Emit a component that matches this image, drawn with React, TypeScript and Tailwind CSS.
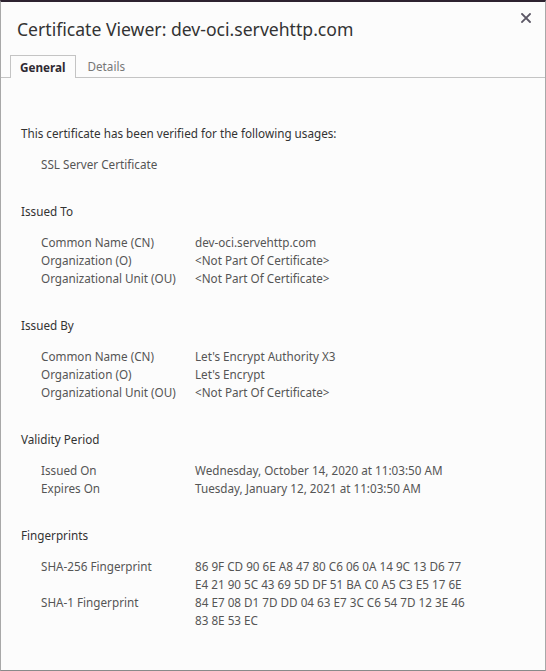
import React from 'react';

type Row = { label: string; value: string[] };

const sections: { title: string; rows: Row[] }[] = [
  {
    title: 'Issued To',
    rows: [
      { label: 'Common Name (CN)', value: ['dev-oci.servehttp.com'] },
      { label: 'Organization (O)', value: ['<Not Part Of Certificate>'] },
      { label: 'Organizational Unit (OU)', value: ['<Not Part Of Certificate>'] },
    ],
  },
  {
    title: 'Issued By',
    rows: [
      { label: 'Common Name (CN)', value: ["Let's Encrypt Authority X3"] },
      { label: 'Organization (O)', value: ["Let's Encrypt"] },
      { label: 'Organizational Unit (OU)', value: ['<Not Part Of Certificate>'] },
    ],
  },
  {
    title: 'Validity Period',
    rows: [
      { label: 'Issued On', value: ['Wednesday, October 14, 2020 at 11:03:50 AM'] },
      { label: 'Expires On', value: ['Tuesday, January 12, 2021 at 11:03:50 AM'] },
    ],
  },
  {
    title: 'Fingerprints',
    rows: [
      {
        label: 'SHA-256 Fingerprint',
        value: ['86 9F CD 90 6E A8 47 80 C6 06 0A 14 9C 13 D6 77', 'E4 21 90 5C 43 69 5D DF 51 BA C0 A5 C3 E5 17 6E'],
      },
      {
        label: 'SHA-1 Fingerprint',
        value: ['84 E7 08 D1 7D DD 04 63 E7 3C C6 54 7D 12 3E 46', '83 8E 53 EC'],
      },
    ],
  },
];

function CloseIcon() {
  return (
    <svg width="10" height="10" viewBox="0 0 10 10" className="block">
      <path d="M1 1L9 9M9 1L1 9" stroke="#5b5765" strokeWidth="1.8" strokeLinecap="square" />
    </svg>
  );
}

export default function App() {
  return (
    <div
      className="w-[546px] h-[671px] bg-[#fcfcfc] border-t-2 border-t-[#2d2230] border-x border-x-[#a8a8a8] border-b border-b-[#8a8a8a] flex flex-col text-[#3c3c3c]"
      style={{ fontFamily: '"Noto Sans", "Open Sans", sans-serif' }}
    >
      <div className="relative pl-[16px] pt-[15px]">
        <h1 className="text-[17.6px] leading-[24px] font-normal text-[#333]">Certificate Viewer: dev-oci.servehttp.com</h1>
        <button className="absolute right-[12px] top-[9px] p-[2px]">
          <CloseIcon />
        </button>
      </div>

      <div className="mt-[14px] flex items-end border-b border-[#c4c4c4] pl-[9px] text-[11.7px]">
        <div className="border border-b-0 border-[#c4c4c4] bg-[#fcfcfc] px-[9px] h-[23px] leading-[22px] font-bold text-[#2f2a33] -mb-px">
          General
        </div>
        <div className="px-[12px] h-[22px] leading-[22px] text-[#777]">Details</div>
      </div>

      <div className="flex-1 pl-[20px] pt-[46px] text-[11.7px] leading-[18px]">
        <p className="text-[#333]">This certificate has been verified for the following usages:</p>
        <p className="mt-[13px] pl-[20px] text-[#555]">SSL Server Certificate</p>

        {sections.map((s) => (
          <div key={s.title} className="mt-[29px]">
            <h2 className="text-[#333]">{s.title}</h2>
            <div className="mt-[13px] pl-[20px] grid grid-cols-[154px_1fr] text-[#555]">
              {s.rows.map((r) => (
                <React.Fragment key={r.label}>
                  <div>{r.label}</div>
                  <div>
                    {r.value.map((v) => (
                      <div key={v}>{v}</div>
                    ))}
                  </div>
                </React.Fragment>
              ))}
            </div>
          </div>
        ))}
      </div>
    </div>
  );
}
